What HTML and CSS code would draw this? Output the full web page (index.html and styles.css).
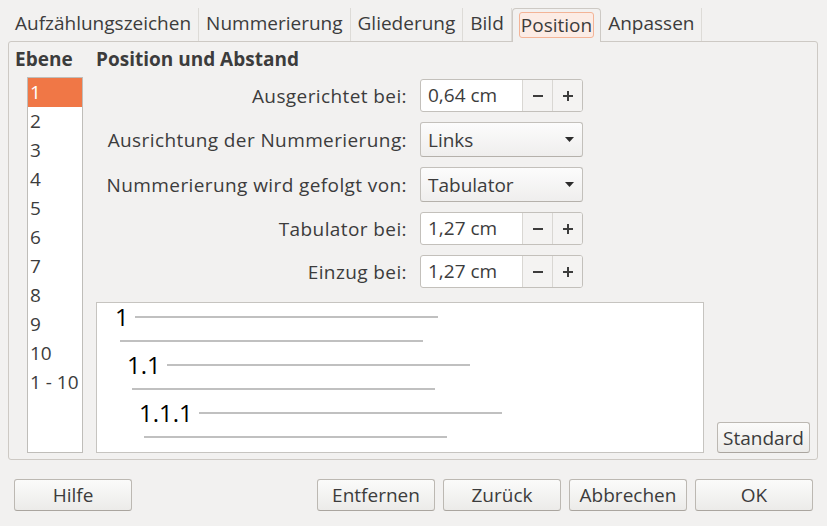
FILE: index.html
```html
<!DOCTYPE html>
<html lang="de">

<head>
    <meta charset="UTF-8">
    <title>Nummerierung und Aufzählungszeichen</title>
    <link rel="stylesheet" href="styles.css">
</head>

<body>
    <div class="dialog">
        <div class="tabs">
            <div class="tab">Aufzählungszeichen</div>
            <div class="tab">Nummerierung</div>
            <div class="tab">Gliederung</div>
            <div class="tab">Bild</div>
            <div class="tab active"><span class="focus">Position</span></div>
            <div class="tab">Anpassen</div>
        </div>

        <div class="panel">
            <div class="level-col">
                <div class="heading">Ebene</div>
                <ul class="level-list">
                    <li class="selected">1</li>
                    <li>2</li>
                    <li>3</li>
                    <li>4</li>
                    <li>5</li>
                    <li>6</li>
                    <li>7</li>
                    <li>8</li>
                    <li>9</li>
                    <li>10</li>
                    <li>1 - 10</li>
                </ul>
            </div>

            <div class="main-col">
                <div class="heading">Position und Abstand</div>
                <div class="form-grid">
                    <label>Ausgerichtet bei:</label>
                    <div class="spin">
                        <span class="spin-value">0,64 cm</span>
                        <span class="spin-btn"><svg width="10" height="10"><rect x="0" y="4" width="10" height="2" fill="#3c3c3c"/></svg></span>
                        <span class="spin-btn"><svg width="10" height="10"><rect x="0" y="4" width="10" height="2" fill="#3c3c3c"/><rect x="4" y="0" width="2" height="10" fill="#3c3c3c"/></svg></span>
                    </div>

                    <label>Ausrichtung der Nummerierung:</label>
                    <div class="combo">
                        <span>Links</span>
                        <svg width="9" height="5"><polygon points="0,0 9,0 4.5,5" fill="#2c2c2c"/></svg>
                    </div>

                    <label>Nummerierung wird gefolgt von:</label>
                    <div class="combo">
                        <span>Tabulator</span>
                        <svg width="9" height="5"><polygon points="0,0 9,0 4.5,5" fill="#2c2c2c"/></svg>
                    </div>

                    <label>Tabulator bei:</label>
                    <div class="spin">
                        <span class="spin-value">1,27 cm</span>
                        <span class="spin-btn"><svg width="10" height="10"><rect x="0" y="4" width="10" height="2" fill="#3c3c3c"/></svg></span>
                        <span class="spin-btn"><svg width="10" height="10"><rect x="0" y="4" width="10" height="2" fill="#3c3c3c"/><rect x="4" y="0" width="2" height="10" fill="#3c3c3c"/></svg></span>
                    </div>

                    <label>Einzug bei:</label>
                    <div class="spin">
                        <span class="spin-value">1,27 cm</span>
                        <span class="spin-btn"><svg width="10" height="10"><rect x="0" y="4" width="10" height="2" fill="#3c3c3c"/></svg></span>
                        <span class="spin-btn"><svg width="10" height="10"><rect x="0" y="4" width="10" height="2" fill="#3c3c3c"/><rect x="4" y="0" width="2" height="10" fill="#3c3c3c"/></svg></span>
                    </div>
                </div>

                <div class="preview-row">
                    <div class="preview">
                        <div class="entry lv1">
                            <div class="row"><span class="num">1</span><span class="rule"></span></div>
                            <div class="row"><span class="rule wrap"></span></div>
                        </div>
                        <div class="entry lv2">
                            <div class="row"><span class="num">1.1</span><span class="rule"></span></div>
                            <div class="row"><span class="rule wrap"></span></div>
                        </div>
                        <div class="entry lv3">
                            <div class="row"><span class="num">1.1.1</span><span class="rule"></span></div>
                            <div class="row"><span class="rule wrap"></span></div>
                        </div>
                    </div>
                    <button class="btn btn-standard">Standard</button>
                </div>
            </div>
        </div>

        <div class="footer">
            <button class="btn">Hilfe</button>
            <div class="spacer"></div>
            <button class="btn">Entfernen</button>
            <button class="btn">Zurück</button>
            <button class="btn">Abbrechen</button>
            <button class="btn">OK</button>
        </div>
    </div>
</body>

</html>
```

FILE: styles.css
```css
* {
    padding: 0;
    margin: 0;
    box-sizing: border-box;
}

body {
    font-family: "Open Sans", "Noto Sans", sans-serif;
    font-size: 19px;
    color: #3c3c3c;
    background-color: #f2f1f0;
}

.dialog {
    width: 827px;
    height: 526px;
    display: flex;
    flex-direction: column;
}

/* tabs */
.tabs {
    display: flex;
    padding: 8px 0 0 8px;
    height: 41px;
    position: relative;
    z-index: 1;
}

.tab {
    height: 33px;
    line-height: 31px;
    padding: 0 7px;
    border-right: 1px solid #dddbd7;
    white-space: nowrap;
}

.tab.active {
    height: 34px;
    padding: 3px 6px 0 6px;
    line-height: 24px;
    background-color: #f2f1f0;
    border: 1px solid #cdc9c4;
    border-bottom: none;
    border-radius: 4px 4px 0 0;
}

.tab.active .focus {
    display: block;
    padding: 0 1px;
    border: 1px solid #f3b497;
    border-radius: 3px;
    background-color: #fcece5;
}

/* panel */
.panel {
    height: 419px;
    margin: 0 9px 0 8px;
    border: 1px solid #cdc9c4;
    border-radius: 3px;
    padding: 5px 7px 6px 6px;
    display: flex;
    gap: 13px;
}

.heading {
    font-weight: bold;
    line-height: 24px;
    white-space: nowrap;
}

.level-col {
    width: 68px;
    display: flex;
    flex-direction: column;
}

.level-list {
    list-style: none;
    flex: 1;
    margin: 6px 0 0 12px;
    background-color: #fff;
    border: 1px solid #bfbdb9;
}

.level-list li {
    height: 29px;
    line-height: 29px;
    padding-left: 2px;
    white-space: nowrap;
}

.level-list li.selected {
    background-color: #f07746;
    color: #fff;
}

.main-col {
    flex: 1;
    display: flex;
    flex-direction: column;
}

.form-grid {
    display: grid;
    grid-template-columns: 311px 163px;
    column-gap: 13px;
    row-gap: 10px;
    align-items: center;
    margin-top: 8px;
}

.form-grid label {
    text-align: right;
    white-space: nowrap;
    letter-spacing: 0.4px;
}

.spin {
    display: flex;
    height: 33px;
    border: 1px solid #c3c0bb;
    border-radius: 3px;
    overflow: hidden;
    background-color: #fff;
}

.spin-value {
    flex: 1;
    padding-left: 7px;
    line-height: 31px;
}

.spin-btn {
    width: 30px;
    display: flex;
    align-items: center;
    justify-content: center;
    background-color: #f4f3f2;
    border-left: 1px solid #d9d7d3;
}

.combo {
    height: 35px;
    border: 1px solid #c3c0bb;
    border-bottom-color: #b5b1ab;
    border-radius: 3px;
    background: linear-gradient(#fcfcfc, #efeeed);
    display: flex;
    align-items: center;
    justify-content: space-between;
    padding: 0 8px 0 7px;
}

/* preview */
.preview-row {
    flex: 1;
    margin-top: 14px;
    display: flex;
    align-items: flex-end;
    gap: 13px;
}

.preview {
    flex: 1;
    align-self: stretch;
    background-color: #fff;
    border: 1px solid #c6c4c0;
    padding-top: 2px;
}

.entry .row {
    height: 24px;
    display: flex;
    align-items: center;
}

.entry.lv1 { padding-left: 18px; }
.entry.lv2 { padding-left: 30px; }
.entry.lv3 { padding-left: 42px; }

.num {
    font-size: 24px;
    line-height: 24px;
    color: #000;
}

.lv1 .num { width: 20px; }
.lv2 .num { width: 40px; }
.lv3 .num { width: 60px; }

.rule {
    width: 303px;
    height: 2px;
    background-color: #c0c0c0;
}

.rule.wrap {
    margin-left: 5px;
}

/* buttons */
.btn {
    font-family: inherit;
    font-size: 19px;
    color: #3c3c3c;
    height: 32px;
    width: 118px;
    border: 1px solid #bcb8b2;
    border-bottom-color: #aaa59f;
    border-radius: 3px;
    background: linear-gradient(#fbfbfa, #ecebe9);
}

.btn-standard {
    width: 93px;
    height: 31px;
}

.footer {
    display: flex;
    gap: 8px;
    padding: 0 14px;
    margin-top: 19px;
}

.spacer {
    flex: 1;
}
```
